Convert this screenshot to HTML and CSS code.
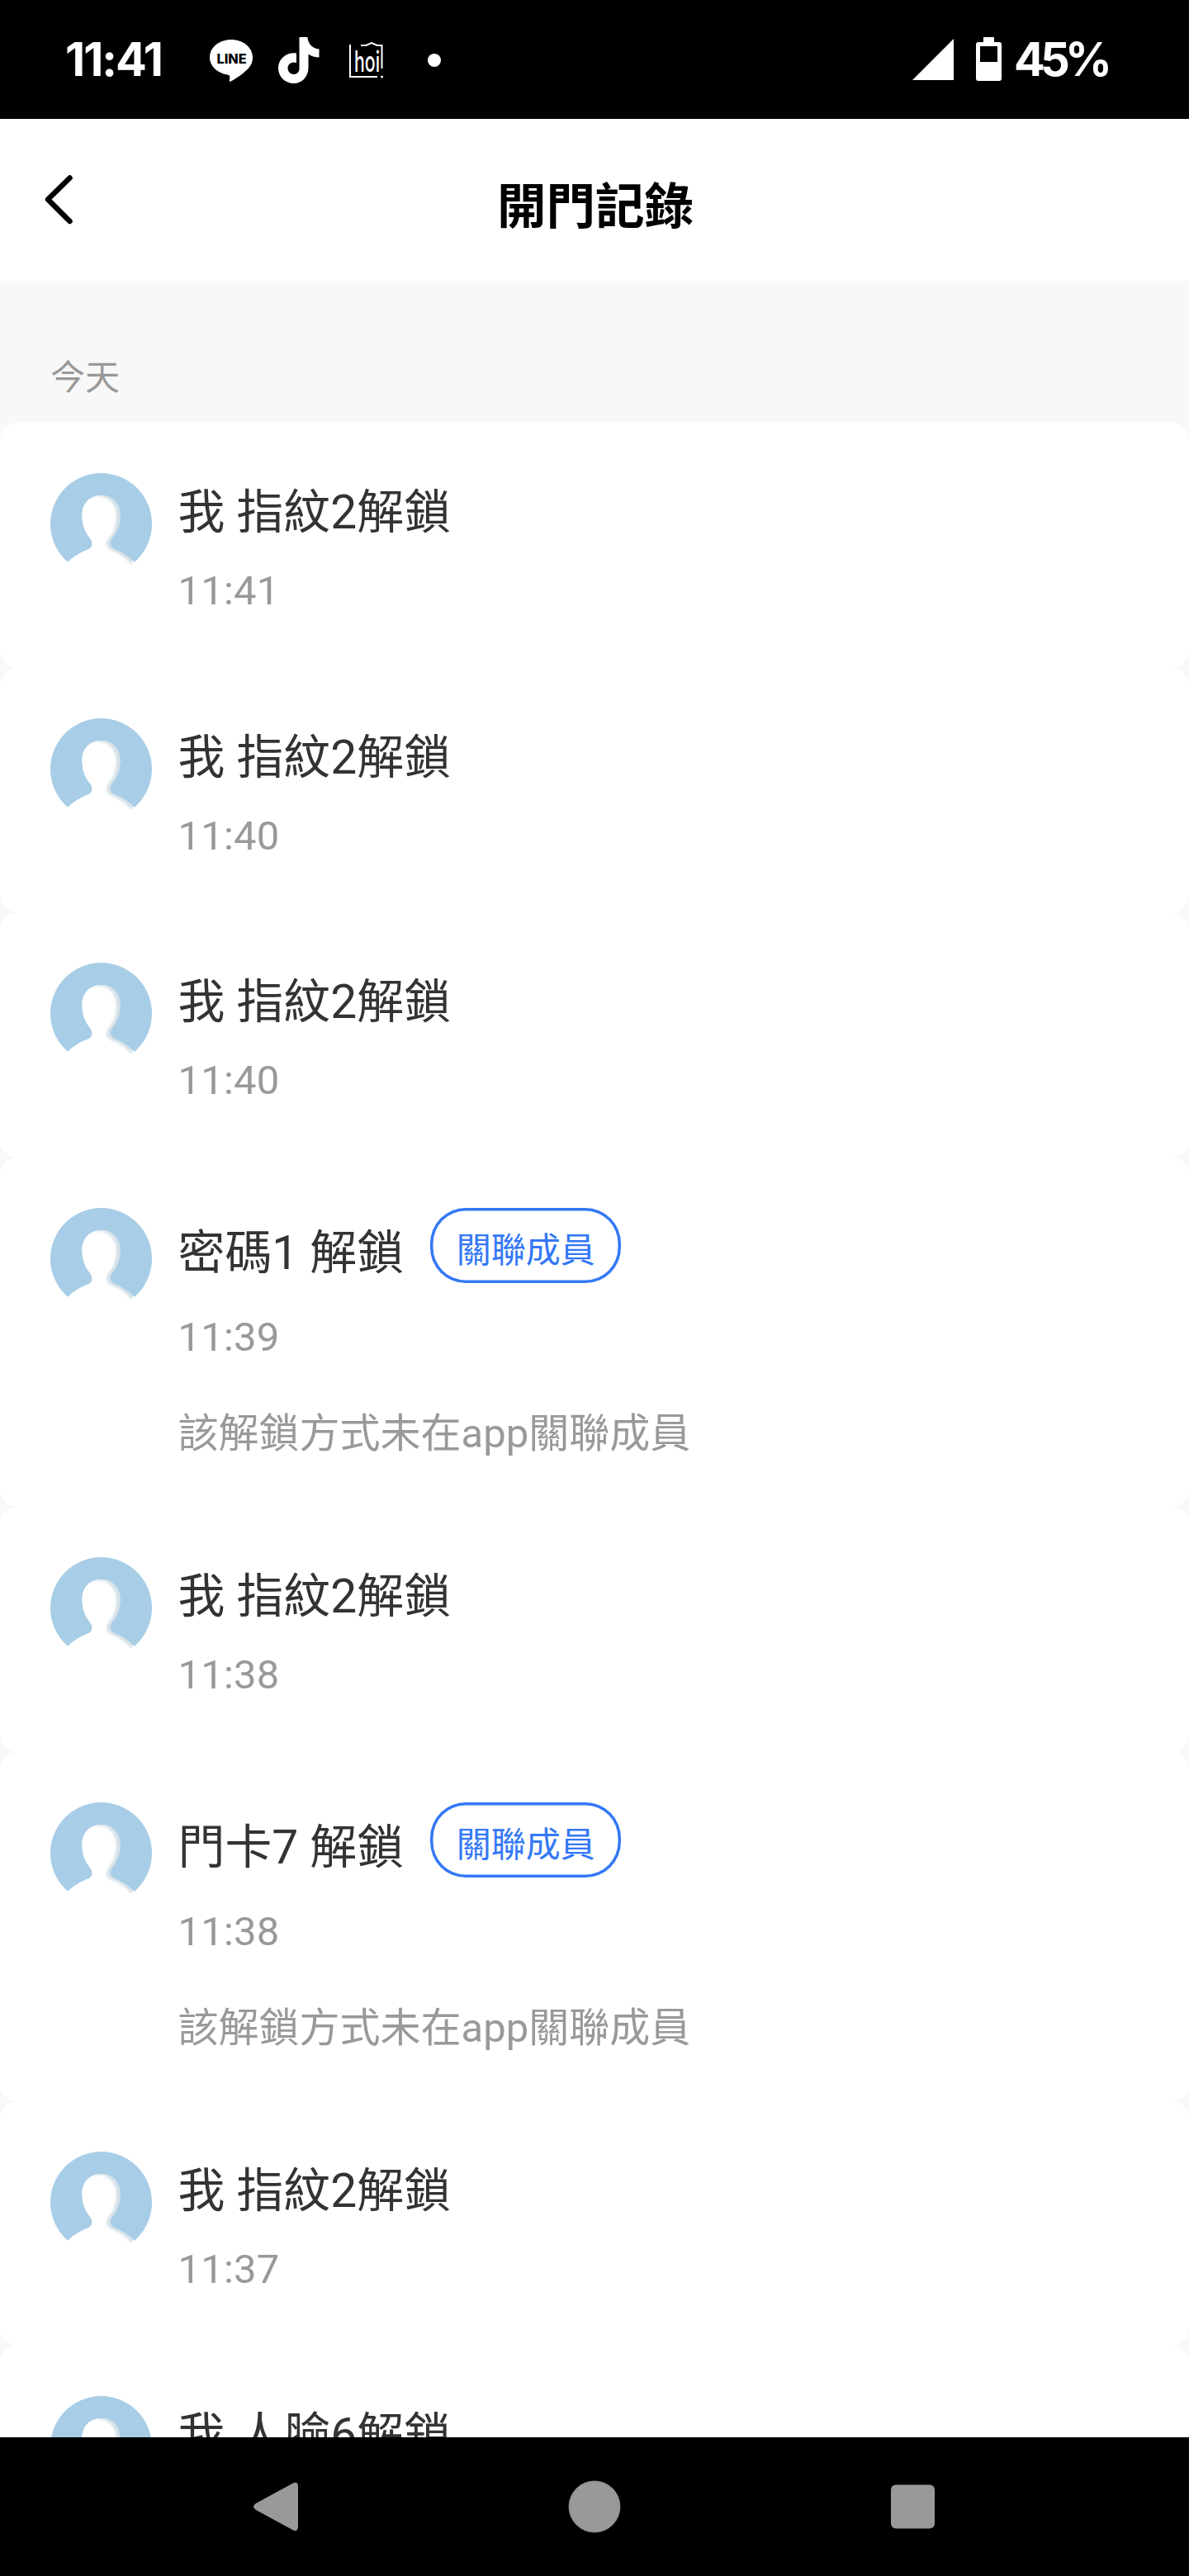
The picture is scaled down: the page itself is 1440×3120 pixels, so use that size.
FILE: index.html
```html
<!DOCTYPE html>
<html lang="zh-Hant">
<head>
    <meta charset="UTF-8">
    <meta name="viewport" content="width=device-width, initial-scale=1.0">
    <title>開門記錄</title>
    <link rel="stylesheet" href="styles.css">
</head>
<body>
    <!-- Shared avatar shape -->
    <svg class="defs" width="0" height="0">
        <defs>
            <clipPath id="avatar-clip"><circle cx="61.5" cy="61.5" r="61.5"/></clipPath>
            <clipPath id="person-clip"><use href="#person"/></clipPath>
            <filter id="soft" x="-20%" y="-20%" width="140%" height="140%"><feGaussianBlur stdDeviation="1.5"/></filter>
            <path id="person" d="M61.500 27C47.500 27 38.500 37 38.500 51C38.500 63 42 71 47 77.500C51.500 83 52 88.500 47 92C36 96 28 101 21 108V123H101.500V108C95 101 87 96 77 92C71.500 88.500 71.500 83 75.500 77.500C81 71 84.500 63 84.500 51C84.500 37 75.500 27 61.500 27Z"/>
            <symbol id="avatar" viewBox="0 0 123 123">
                <g clip-path="url(#avatar-clip)">
                    <rect width="123" height="108" fill="#a8cde7"/>
                    <use href="#person" fill="#fff"/>
                    <g clip-path="url(#person-clip)">
                        <rect x="49" y="20" width="50" height="90" fill="#d3e0e6"/>
                        <use href="#person" fill="#fff" x="-4.500" y="1" filter="url(#soft)"/>
                    </g>
                </g>
            </symbol>
        </defs>
    </svg>

    <div class="status-bar">
        <span class="clock">11:41</span>
        <svg class="icon-line" width="52" height="51" viewBox="0 0 52 51">
            <path fill="#fff" d="M26 0C11.500 0 0 9.500 0 21.500C0 32 9 40.500 21.500 42.500C24 43 24.500 44 24.300 46L23.800 49.500C23.700 51 24.800 51 26 50.300C32 47 42.500 40 47.500 34C50.500 30.500 52 26.500 52 21.500C52 9.500 40.500 0 26 0Z"/>
            <text class="line-text" x="8.500" y="28.500" textLength="36" lengthAdjust="spacingAndGlyphs">LINE</text>
        </svg>
        <svg class="icon-tiktok" width="50" height="56" viewBox="0 0 50 56">
            <path fill="#fff" d="M25.500 0H35.500C36 8 41 13.500 49.500 14.500V24.500C44.500 24.500 40 23 36.500 20.500V37C36.500 48 28.500 56 19 56C8.500 56 0 48 0 37.500C0 26 10 18 22 19.500V31C16.500 29 11.500 32.500 11.500 37.500C11.500 41.500 14.500 45 19 45C23 45 25.500 42 25.500 38Z"/>
        </svg>
        <svg class="icon-hoi" width="41" height="44" viewBox="0 0 41 44">
            <path fill="none" stroke="#fff" stroke-width="2" d="M1 3V42H34M14 4H20L27 1L34 4H39.500V32"/>
            <circle cx="39.500" cy="42" r="1.500" fill="#fff"/>
            <text class="hoi-text" x="6" y="36" textLength="31" lengthAdjust="spacingAndGlyphs">hoi</text>
        </svg>
        <span class="more-dot"></span>
        <div class="status-right">
            <svg width="50" height="50" viewBox="0 0 50 50"><path fill="#fff" d="M50 0V50H0Z"/></svg>
            <svg class="icon-battery" width="31" height="53" viewBox="0 0 31 53">
                <path fill="#fff" fill-rule="evenodd" d="M9 0H22V6H28Q31 6 31 9V50Q31 53 28 53H3Q0 53 0 50V9Q0 6 3 6H9ZM5 11V30H26V11Z"/>
            </svg>
            <span class="battery-level">45%</span>
        </div>
    </div>

    <header class="header">
        <svg class="back" width="34" height="60" viewBox="0 0 34 60"><path d="M30.500 3.500L4 29.500L30.500 56" fill="none" stroke="#000" stroke-width="6.500" stroke-linecap="round" stroke-linejoin="round"/></svg>
        <h1>開門記錄</h1>
    </header>

    <main class="records">
        <h2 class="day">今天</h2>

        <div class="card">
            <svg class="avatar"><use href="#avatar"/></svg>
            <div class="info">
                <div class="title">我 指紋2解鎖</div>
                <div class="time">11:41</div>
            </div>
        </div>

        <div class="card">
            <svg class="avatar"><use href="#avatar"/></svg>
            <div class="info">
                <div class="title">我 指紋2解鎖</div>
                <div class="time">11:40</div>
            </div>
        </div>

        <div class="card">
            <svg class="avatar"><use href="#avatar"/></svg>
            <div class="info">
                <div class="title">我 指紋2解鎖</div>
                <div class="time">11:40</div>
            </div>
        </div>

        <div class="card unlinked">
            <svg class="avatar"><use href="#avatar"/></svg>
            <div class="info">
                <div class="title">密碼1 解鎖<button class="link-member">關聯成員</button></div>
                <div class="time">11:39</div>
                <div class="note">該解鎖方式未在app關聯成員</div>
            </div>
        </div>

        <div class="card">
            <svg class="avatar"><use href="#avatar"/></svg>
            <div class="info">
                <div class="title">我 指紋2解鎖</div>
                <div class="time">11:38</div>
            </div>
        </div>

        <div class="card unlinked">
            <svg class="avatar"><use href="#avatar"/></svg>
            <div class="info">
                <div class="title">門卡7 解鎖<button class="link-member">關聯成員</button></div>
                <div class="time">11:38</div>
                <div class="note">該解鎖方式未在app關聯成員</div>
            </div>
        </div>

        <div class="card">
            <svg class="avatar"><use href="#avatar"/></svg>
            <div class="info">
                <div class="title">我 指紋2解鎖</div>
                <div class="time">11:37</div>
            </div>
        </div>

        <div class="card">
            <svg class="avatar"><use href="#avatar"/></svg>
            <div class="info">
                <div class="title">我 人臉6解鎖</div>
            </div>
        </div>
    </main>

    <nav class="nav-bar">
        <svg width="96" height="96" viewBox="0 0 96 96"><path fill="#999" d="M22 44L67 19.500Q73 17 73 24V72Q73 79 67 76.500L22 52Q16 48 22 44Z"/></svg>
        <svg width="96" height="96" viewBox="0 0 96 96"><circle cx="48" cy="48" r="31" fill="#999" stroke="#868686" stroke-width="1"/></svg>
        <svg width="96" height="96" viewBox="0 0 96 96"><rect x="23" y="21.500" width="53" height="53" rx="6" fill="#999"/></svg>
    </nav>
</body>
</html>
```

FILE: styles.css
```css
* { box-sizing: border-box; }
body {
    margin: 0;
    width: 1440px;
    height: 3120px;
    overflow: hidden;
    display: flex;
    flex-direction: column;
    background-color: #f8f8f8;
    font-family: Roboto, "Noto Sans CJK TC", sans-serif;
}
svg { display: block; flex: none; }
.defs { position: absolute; }

/* Status bar */
.status-bar {
    flex: none;
    display: flex;
    align-items: flex-start;
    height: 144px;
    padding: 45px 99px 0 79px;
    background-color: #000;
    color: #fff;
}
.clock, .battery-level {
    font-family: Inter, sans-serif;
    font-weight: 700;
    font-size: 56px;
    line-height: 54px;
    white-space: nowrap;
}
.clock { width: 175px; letter-spacing: -2px; }
.icon-line { margin-top: 3px; }
.icon-tiktok { margin-left: 31px; }
.icon-hoi { margin: 6px 0 0 36px; overflow: visible; }
.line-text { font: 800 16px Inter, sans-serif; fill: #000; }
.hoi-text { font: 500 35px Inter, sans-serif; fill: #fff; }
.more-dot { width: 16px; height: 16px; margin: 20px 0 0 54px; border-radius: 50%; background-color: #fff; }
.status-right { display: flex; margin-left: auto; }
.status-right svg { margin-top: 2px; }
.status-right .icon-battery { margin: 0 15px 0 27px; }
.battery-level { width: 113px; letter-spacing: -5.8px; }

/* Page header */
.header {
    flex: none;
    display: grid;
    grid-template-columns: 88px 1fr 88px;
    align-items: center;
    height: 196px;
    background-color: #fff;
}
.back { margin-left: 54px; }
.header h1 { margin: 18px 0 0 2px; font-size: 59.5px; font-weight: 700; line-height: 72px; text-align: center; color: #000; }

/* Record list */
.records { flex: 1; min-height: 0; overflow: hidden; }
.day { height: 172px; margin: 0; padding: 88px 61px 0; font-size: 42px; font-weight: 400; line-height: 60px; color: #999; }
.card {
    display: flex;
    gap: 31.5px;
    height: 296.6px;
    padding: 61px 61px 0;
    border-radius: 21px;
    background-color: #fff;
}
.card.unlinked { height: 423.2px; }
.avatar { width: 123px; height: 123px; }
.title { display: flex; align-items: flex-start; font-size: 56.9px; line-height: 95px; height: 96px; color: #333; }
.time, .note { font-size: 49px; line-height: 58px; color: #999; }
.time { margin-top: 18px; letter-spacing: 0.2px; }
.unlinked .title { height: 109.4px; line-height: 109.4px; }
.unlinked .time { margin-top: 19px; }
.note { margin-top: 59.3px; }
.link-member {
    width: 231px;
    height: 91px;
    margin-left: 32px;
    padding: 13px 0 0;
    border: 0;
    border-radius: 43px;
    box-shadow: inset 0 0 0 3.5px #3478f6;
    background: none;
    font-family: inherit;
    font-size: 42px;
    line-height: 77px;
    color: #3478f6;
}

/* Android navigation */
.nav-bar {
    flex: none;
    display: flex;
    justify-content: center;
    align-items: center;
    gap: 288px;
    height: 168px;
    background-color: #000;
}
```
